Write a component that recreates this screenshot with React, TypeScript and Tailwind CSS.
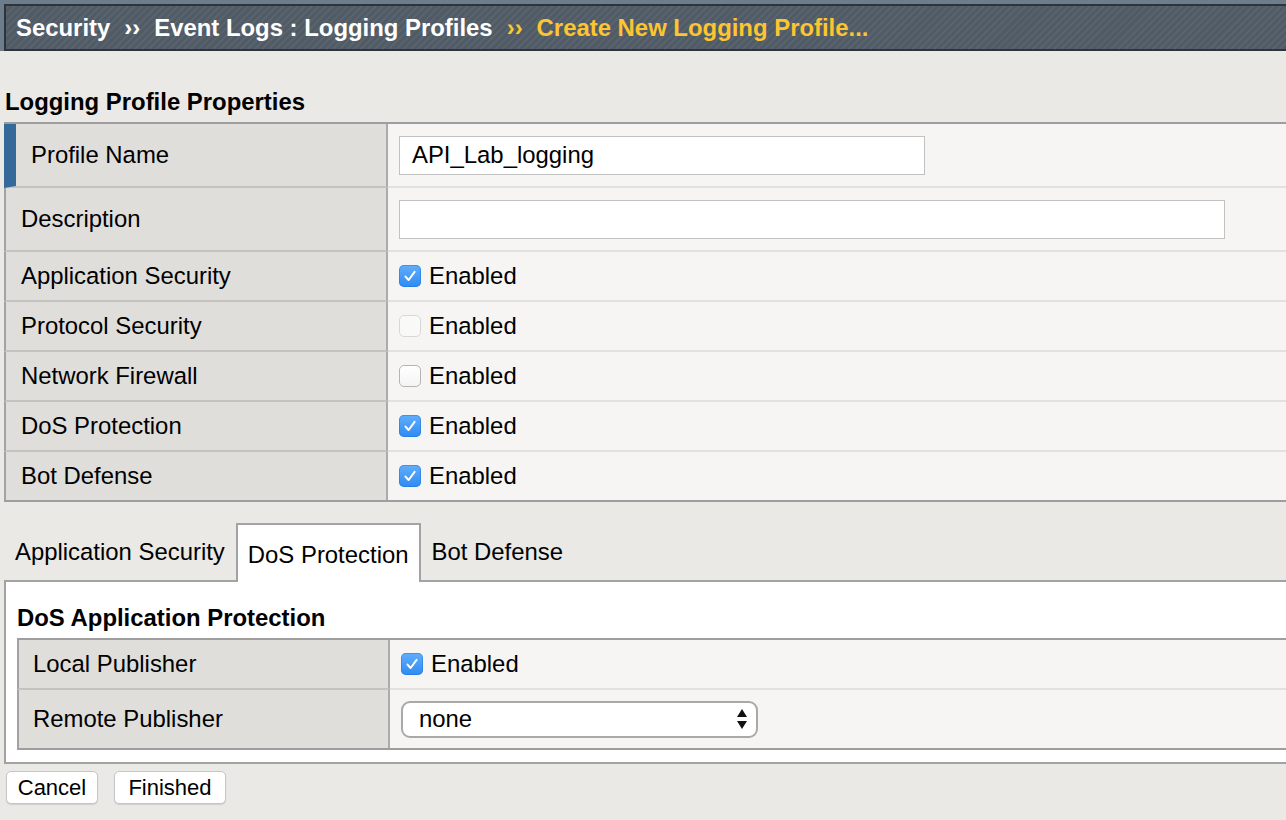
import React from 'react';

// Label/value rows of the "Logging Profile Properties" table
type Row = {
  label: string;
  kind: 'text' | 'check';
  value?: string;
  checked?: boolean;
  faded?: boolean;
  inputWidth?: string;
};

const PROPERTY_ROWS: Row[] = [
  { label: 'Profile Name', kind: 'text', value: 'API_Lab_logging', inputWidth: 'w-[526px]' },
  { label: 'Description', kind: 'text', value: '', inputWidth: 'w-[826px]' },
  { label: 'Application Security', kind: 'check', checked: true },
  { label: 'Protocol Security', kind: 'check', checked: false, faded: true },
  { label: 'Network Firewall', kind: 'check', checked: false },
  { label: 'DoS Protection', kind: 'check', checked: true },
  { label: 'Bot Defense', kind: 'check', checked: true },
];

const TABS = ['Application Security', 'DoS Protection', 'Bot Defense'];

function Checkbox({ checked, faded }: { checked?: boolean; faded?: boolean }) {
  if (checked) {
    return (
      <span className="flex h-[22px] w-[22px] shrink-0 items-center justify-center rounded-[5px] bg-[linear-gradient(#62aefc,#2d8bf3)] shadow-[inset_0_0_0_1px_rgba(30,110,210,0.45)]">
        <svg width="16" height="16" viewBox="0 0 16 16" fill="none">
          <path d="M3.5 8.6 L6.6 12 L12.6 3.8" stroke="white" strokeWidth="2" strokeLinecap="round" strokeLinejoin="round" />
        </svg>
      </span>
    );
  }
  return (
    <span
      className={`block h-[22px] w-[22px] shrink-0 rounded-[5px] border ${
        faded ? 'border-[#d8d8d8] bg-[#f9f9f8]' : 'border-[#b4b4b4] bg-[linear-gradient(#ffffff,#f4f4f4)]'
      }`}
    />
  );
}

function CheckValue({ checked, faded }: { checked?: boolean; faded?: boolean }) {
  return (
    <div className="flex items-center gap-[8px]">
      <Checkbox checked={checked} faded={faded} />
      <span>Enabled</span>
    </div>
  );
}

function PropertyTable() {
  return (
    <div className="border-y-2 border-[#9e9e9e]">
      {PROPERTY_ROWS.map((row, i) => {
        const last = i === PROPERTY_ROWS.length - 1;
        const first = i === 0;
        const height = row.kind === 'text' ? 'h-[64px]' : last ? 'h-[48px]' : 'h-[50px]';
        return (
          <div key={row.label} className={`flex ${height}`}>
            <div
              className={`flex w-[384px] shrink-0 items-center border-r-2 border-r-[#ababab] bg-[#dfdedb] pl-[15px] ${
                first ? 'border-l-[12px] border-l-[#35699a]' : 'border-l-2 border-l-[#a3a3a3]'
              } ${last ? '' : 'border-b-2 border-b-[#c4c3bf]'}`}
            >
              {row.label}
            </div>
            <div className={`flex flex-1 items-center bg-[#f6f5f3] pl-[11px] ${last ? '' : 'border-b-2 border-b-[#e2e1de]'}`}>
              {row.kind === 'text' ? (
                <div className={`flex h-[39px] items-center border border-[#c2c2c2] bg-white pl-[12px] ${row.inputWidth}`}>
                  {row.value}
                </div>
              ) : (
                <CheckValue checked={row.checked} faded={row.faded} />
              )}
            </div>
          </div>
        );
      })}
    </div>
  );
}

function SelectArrows() {
  return (
    <svg width="12" height="22" viewBox="0 0 12 22">
      <path d="M6 1 L11 9 L1 9 Z" fill="#111" />
      <path d="M6 21 L11 13 L1 13 Z" fill="#111" />
    </svg>
  );
}

function DosTable() {
  return (
    <div className="ml-[11px] border-y-2 border-[#9e9e9e]">
      <div className="flex h-[50px]">
        <div className="flex w-[373px] shrink-0 items-center border-b-2 border-l-2 border-r-2 border-b-[#c4c3bf] border-l-[#a3a3a3] border-r-[#ababab] bg-[#dfdedb] pl-[14px]">
          Local Publisher
        </div>
        <div className="flex flex-1 items-center border-b-2 border-b-[#e2e1de] bg-[#f6f5f3] pl-[11px]">
          <CheckValue checked />
        </div>
      </div>
      <div className="flex h-[58px]">
        <div className="flex w-[373px] shrink-0 items-center border-l-2 border-r-2 border-l-[#a3a3a3] border-r-[#ababab] bg-[#dfdedb] pl-[14px]">
          Remote Publisher
        </div>
        <div className="flex flex-1 items-center bg-[#f6f5f3] pl-[11px]">
          <div className="flex h-[37px] w-[357px] items-center justify-between rounded-[9px] border-2 border-[#a9a9a9] bg-white pl-[16px] pr-[8px]">
            <span>none</span>
            <SelectArrows />
          </div>
        </div>
      </div>
    </div>
  );
}

export default function App() {
  return (
    <div className="min-h-[820px] w-full overflow-hidden bg-[#eae9e5] font-['Liberation_Sans',Arial,sans-serif] text-[23.9px] leading-[24px] text-black">
      {/* breadcrumb header */}
      <div className="bg-[#6e7d8c] pl-[4px] pt-[4px]">
        <div className="flex h-[47px] items-center border-y-2 border-l-2 border-[#2f3438] bg-[repeating-linear-gradient(-45deg,#505b65_0px,#505b65_3px,#58636d_3px,#58636d_5px)] pl-[10px] font-bold">
          <span className="text-white">Security</span>
          <span className="mx-[14px] text-white">››</span>
          <span className="text-white">Event Logs : Logging Profiles</span>
          <span className="mx-[14px] text-[#fdc52f]">››</span>
          <span className="text-[#fdc52f]">Create New Logging Profile...</span>
        </div>
      </div>

      <div className="pl-[4px]">
        <div className="h-[71px] pl-[1px] pt-[39px] font-bold">Logging Profile Properties</div>
        <PropertyTable />

        {/* tabs */}
        <div className="flex h-[78px] items-end pt-[21px]">
          {TABS.map(t =>
            t === 'DoS Protection' ? (
              <div
                key={t}
                className="relative z-10 -mb-[2px] flex h-[59px] items-center border-x-2 border-t-2 border-[#a3a3a3] bg-white px-[10px] pt-[2px]"
              >
                {t}
              </div>
            ) : (
              <div key={t} className="flex h-[57px] items-center px-[11px]">
                {t}
              </div>
            )
          )}
        </div>

        <div className="border-y-2 border-l-2 border-[#a3a3a3] bg-white pb-[12px]">
          <div className="pl-[11px] pt-[24px] pb-[8px] font-bold">DoS Application Protection</div>
          <DosTable />
        </div>

        <div className="flex gap-[16px] pl-[2px] pt-[7px] text-[22px]">
          <button className="flex h-[33px] w-[92px] items-center justify-center rounded-[5px] border border-[#c6c6c6] bg-white shadow-[0_1px_1px_rgba(0,0,0,0.12)]">
            Cancel
          </button>
          <button className="flex h-[33px] w-[112px] items-center justify-center rounded-[5px] border border-[#c6c6c6] bg-white shadow-[0_1px_1px_rgba(0,0,0,0.12)]">
            Finished
          </button>
        </div>
      </div>
    </div>
  );
}
